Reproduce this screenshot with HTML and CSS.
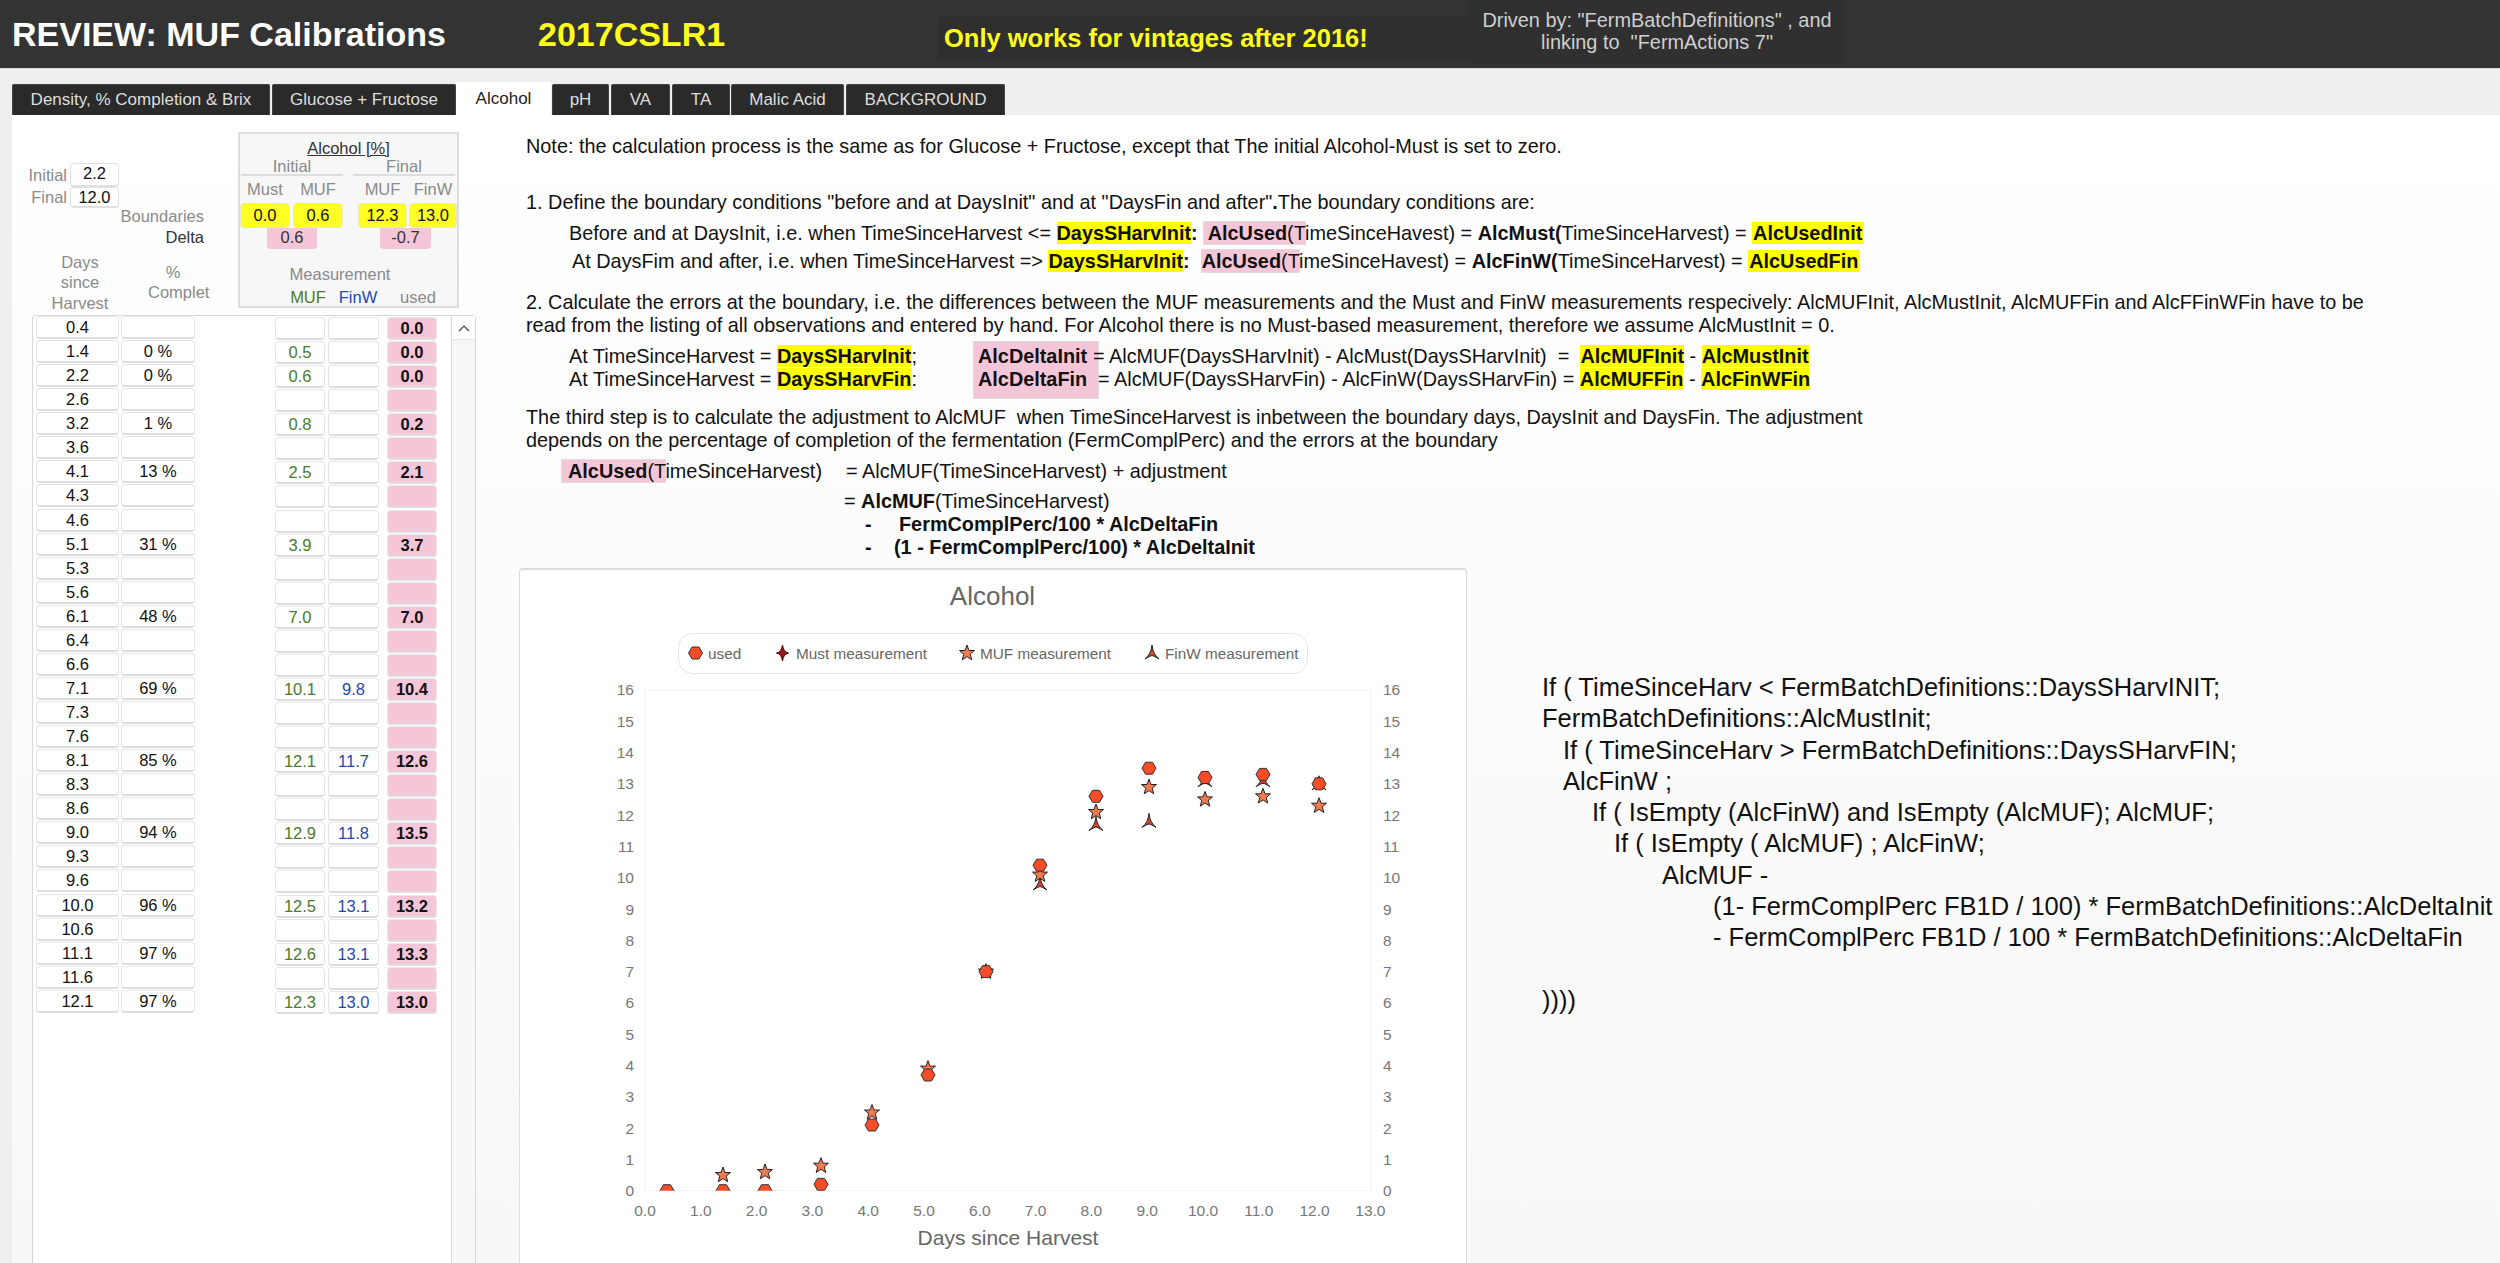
FILE: index.html
```html
<!DOCTYPE html>
<html lang="en">
<head>
<meta charset="utf-8">
<title>REVIEW: MUF Calibrations</title>
<link rel="stylesheet" href="styles.css">
</head>
<body>
<header class="topbar">
  <div class="h-title">REVIEW: MUF Calibrations</div>
  <div class="h-code">2017CSLR1</div>
  <div class="h-note">Only works for vintages after 2016!</div>
  <div class="h-driven">Driven by: "FermBatchDefinitions" , and<br>linking to&nbsp; "FermActions 7"</div>
</header>
<nav class="tabs">
  <a class="tab t1">Density, % Completion &amp; Brix</a>
  <a class="tab t2">Glucose + Fructose</a>
  <a class="tab t3 active">Alcohol</a>
  <a class="tab t4">pH</a>
  <a class="tab t5">VA</a>
  <a class="tab t6">TA</a>
  <a class="tab t7">Malic Acid</a>
  <a class="tab t8">BACKGROUND</a>
</nav>
<main class="panel">
  <section class="left">
    <div class="lhead">
      <div class="params">
        <div class="param first"><span class="plabel">Initial</span><span class="pinput">2.2</span></div>
        <div class="param second"><span class="plabel">Final</span><span class="pinput">12.0</span></div>
        <div class="bound grey">Boundaries</div>
        <div class="bound">Delta</div>
        <div class="colheads">
          <div class="ch-days grey">Days<br>since<br>Harvest</div>
          <div class="ch-pct grey">%<br>Complet</div>
        </div>
      </div>
      <div class="box">
        <div class="box-title"><u>Alcohol [%]</u></div>
        <div class="box-groups"><div class="grey">Initial</div><div class="grey g2">Final</div></div>
        <div class="box-cells heads grey"><span class="b1">Must</span><span class="b2">MUF</span><span class="b3">MUF</span><span class="b4">FinW</span></div>
        <div class="box-cells vals"><span class="b1 yel">0.0</span><span class="b2 yel">0.6</span><span class="b3 yel">12.3</span><span class="b4 yel">13.0</span></div>
        <div class="box-deltas"><span class="d1">0.6</span><span class="d2">-0.7</span></div>
        <div class="box-meas grey">Measurement</div>
        <div class="box-legend"><span class="l1 green">MUF</span><span class="l2 blue">FinW</span><span class="l3 grey">used</span></div>
      </div>
    </div>
    <div class="portal">
      <div class="rows">
        <div class="row"><span class="c cd">0.4</span><span class="c cp"></span><span class="c cm"></span><span class="c cf"></span><span class="c cu">0.0</span></div>
        <div class="row"><span class="c cd">1.4</span><span class="c cp">0 %</span><span class="c cm">0.5</span><span class="c cf"></span><span class="c cu">0.0</span></div>
        <div class="row"><span class="c cd">2.2</span><span class="c cp">0 %</span><span class="c cm">0.6</span><span class="c cf"></span><span class="c cu">0.0</span></div>
        <div class="row"><span class="c cd">2.6</span><span class="c cp"></span><span class="c cm"></span><span class="c cf"></span><span class="c cu"></span></div>
        <div class="row"><span class="c cd">3.2</span><span class="c cp">1 %</span><span class="c cm">0.8</span><span class="c cf"></span><span class="c cu">0.2</span></div>
        <div class="row"><span class="c cd">3.6</span><span class="c cp"></span><span class="c cm"></span><span class="c cf"></span><span class="c cu"></span></div>
        <div class="row"><span class="c cd">4.1</span><span class="c cp">13 %</span><span class="c cm">2.5</span><span class="c cf"></span><span class="c cu">2.1</span></div>
        <div class="row"><span class="c cd">4.3</span><span class="c cp"></span><span class="c cm"></span><span class="c cf"></span><span class="c cu"></span></div>
        <div class="row"><span class="c cd">4.6</span><span class="c cp"></span><span class="c cm"></span><span class="c cf"></span><span class="c cu"></span></div>
        <div class="row"><span class="c cd">5.1</span><span class="c cp">31 %</span><span class="c cm">3.9</span><span class="c cf"></span><span class="c cu">3.7</span></div>
        <div class="row"><span class="c cd">5.3</span><span class="c cp"></span><span class="c cm"></span><span class="c cf"></span><span class="c cu"></span></div>
        <div class="row"><span class="c cd">5.6</span><span class="c cp"></span><span class="c cm"></span><span class="c cf"></span><span class="c cu"></span></div>
        <div class="row"><span class="c cd">6.1</span><span class="c cp">48 %</span><span class="c cm">7.0</span><span class="c cf"></span><span class="c cu">7.0</span></div>
        <div class="row"><span class="c cd">6.4</span><span class="c cp"></span><span class="c cm"></span><span class="c cf"></span><span class="c cu"></span></div>
        <div class="row"><span class="c cd">6.6</span><span class="c cp"></span><span class="c cm"></span><span class="c cf"></span><span class="c cu"></span></div>
        <div class="row"><span class="c cd">7.1</span><span class="c cp">69 %</span><span class="c cm">10.1</span><span class="c cf">9.8</span><span class="c cu">10.4</span></div>
        <div class="row"><span class="c cd">7.3</span><span class="c cp"></span><span class="c cm"></span><span class="c cf"></span><span class="c cu"></span></div>
        <div class="row"><span class="c cd">7.6</span><span class="c cp"></span><span class="c cm"></span><span class="c cf"></span><span class="c cu"></span></div>
        <div class="row"><span class="c cd">8.1</span><span class="c cp">85 %</span><span class="c cm">12.1</span><span class="c cf">11.7</span><span class="c cu">12.6</span></div>
        <div class="row"><span class="c cd">8.3</span><span class="c cp"></span><span class="c cm"></span><span class="c cf"></span><span class="c cu"></span></div>
        <div class="row"><span class="c cd">8.6</span><span class="c cp"></span><span class="c cm"></span><span class="c cf"></span><span class="c cu"></span></div>
        <div class="row"><span class="c cd">9.0</span><span class="c cp">94 %</span><span class="c cm">12.9</span><span class="c cf">11.8</span><span class="c cu">13.5</span></div>
        <div class="row"><span class="c cd">9.3</span><span class="c cp"></span><span class="c cm"></span><span class="c cf"></span><span class="c cu"></span></div>
        <div class="row"><span class="c cd">9.6</span><span class="c cp"></span><span class="c cm"></span><span class="c cf"></span><span class="c cu"></span></div>
        <div class="row"><span class="c cd">10.0</span><span class="c cp">96 %</span><span class="c cm">12.5</span><span class="c cf">13.1</span><span class="c cu">13.2</span></div>
        <div class="row"><span class="c cd">10.6</span><span class="c cp"></span><span class="c cm"></span><span class="c cf"></span><span class="c cu"></span></div>
        <div class="row"><span class="c cd">11.1</span><span class="c cp">97 %</span><span class="c cm">12.6</span><span class="c cf">13.1</span><span class="c cu">13.3</span></div>
        <div class="row"><span class="c cd">11.6</span><span class="c cp"></span><span class="c cm"></span><span class="c cf"></span><span class="c cu"></span></div>
        <div class="row"><span class="c cd">12.1</span><span class="c cp">97 %</span><span class="c cm">12.3</span><span class="c cf">13.0</span><span class="c cu">13.0</span></div>
      </div>
      <div class="scrollbar">
        <div class="scroll-up"><svg width="12" height="8" viewBox="0 0 12 8"><path d="M1 7 L6 2 L11 7" fill="none" stroke="#444" stroke-width="1.2"/></svg></div>
      </div>
    </div>
  </section>
  <section class="right">
    <p class="line note">Note: the calculation process is the same as for Glucose + Fructose, except that The initial Alcohol-Must is set to zero.</p>
    <p class="line step1">1. Define the boundary conditions "before and at DaysInit" and at "DaysFin and after"<b>.</b>The boundary conditions are:</p>
    <p class="line cond c1">Before and at DaysInit, i.e. when TimeSinceHarvest &lt;= <b class="y">DaysSHarvInit</b><b>:</b><span class="pink pk1"><b>AlcUsed</b>(T</span>imeSinceHavest) = <b>AlcMust(</b>TimeSinceHarvest) = <b class="y yp">AlcUsedInit</b></p>
    <p class="line cond c2">At DaysFim and after, i.e. when TimeSinceHarvest =&gt; <b class="y">DaysSHarvInit</b><b>:</b><span class="pink pk2"><b>AlcUsed</b>(T</span>imeSinceHavest) = <b>AlcFinW(</b>TimeSinceHarvest) = <b class="y yp">AlcUsedFin</b></p>
    <p class="line step2">2. Calculate the errors at the boundary, i.e. the differences between the MUF measurements and the Must and FinW measurements respecively: AlcMUFInit, AlcMustInit, AlcMUFFin and AlcFFinWFin have to be<br>read from the listing of all observations and entered by hand. For Alcohol there is no Must-based measurement, therefore we assume AlcMustInit = 0.</p>
    <div class="deltas">
      <div class="line">At TimeSinceHarvest = <b class="y">DaysSHarvInit</b>;</div>
      <div class="delta-box"><b>AlcDeltaInit</b><br><b>AlcDeltaFin</b></div>
      <div class="line de1">= AlcMUF(DaysSHarvInit) - AlcMust(DaysSHarvInit)  =  <b class="y">AlcMUFInit</b> - <b class="y">AlcMustInit</b></div>
      <div class="line">At TimeSinceHarvest = <b class="y">DaysSHarvFin</b>:</div>
      <div class="line de2">= AlcMUF(DaysSHarvFin) - AlcFinW(DaysSHarvFin) = <b class="y">AlcMUFFin</b> - <b class="y">AlcFinWFin</b></div>
    </div>
    <p class="line step3">The third step is to calculate the adjustment to AlcMUF  when TimeSinceHarvest is inbetween the boundary days, DaysInit and DaysFin. The adjustment<br>depends on the percentage of completion of the fermentation (FermComplPerc) and the errors at the boundary</p>
    <div class="line formula f1"><span class="f1a"><span class="pink pk3"><b>AlcUsed</b>(T</span>imeSinceHarvest)</span><span>= AlcMUF(TimeSinceHarvest) + adjustment</span></div>
    <div class="line formula f2">= <b>AlcMUF</b>(TimeSinceHarvest)</div>
    <div class="line formula f3"><b class="dash1">-</b><b>FermComplPerc/100 * AlcDeltaFin</b></div>
    <div class="line formula f3"><b class="dash2">-</b><b>(1 - FermComplPerc/100) * AlcDeltaInit</b></div>
    <div class="lower">
      <figure class="chart">
        <svg class="chart-svg" width="946" height="692" viewBox="520 570 946 692">
          <defs>
            <path id="hex" d="M-7 0 L-3.5 -6 L3.5 -6 L7 0 L3.5 6 L-3.5 6 Z" fill="#f44d27" stroke="#333" stroke-width="1"/>
            <path id="star" d="M0 -8 L2 -2.5 L7.5 -2.5 L3.2 1.2 L4.8 6.8 L0 3.6 L-4.8 6.8 L-3.2 1.2 L-7.5 -2.5 L-2 -2.5 Z" fill="#f47a50" stroke="#222" stroke-width="1"/>
            <path id="fin" d="M0 -8 Q0.8 1 7 6 Q1.5 2.5 0 2.5 Q-1.5 2.5 -7 6 Q-0.8 1 0 -8 Z" fill="#d4472c" stroke="#222" stroke-width="1"/>
            <path id="must" d="M0 -8 Q0.8 -1 6 0 Q0.8 1 0 8 Q-0.8 1 -6 0 Q-0.8 -1 0 -8 Z" fill="#a01020" stroke="#400" stroke-width="1"/>
            <clipPath id="plot"><rect x="645" y="690" width="726" height="500.7"/></clipPath>
          </defs>
          <text class="c-title" x="992.5" y="596">Alcohol</text>
          <rect class="c-legend" x="678.5" y="633.5" width="629" height="40" rx="14"/>
          <use href="#hex" x="695.5" y="653"/><text class="c-leg" x="708" y="653">used</text>
          <use href="#must" x="782.5" y="653"/><text class="c-leg" x="796" y="653">Must measurement</text>
          <use href="#star" x="967" y="653"/><text class="c-leg" x="980" y="653">MUF measurement</text>
          <use href="#fin" x="1152" y="653"/><text class="c-leg" x="1165" y="653">FinW measurement</text>
          <rect class="c-plot" x="645" y="690" width="726" height="500.7"/>
          <g class="tick tl">
            <text x="634" y="1190.7">0</text><text x="634" y="1159.4">1</text><text x="634" y="1128.1">2</text><text x="634" y="1096.8">3</text><text x="634" y="1065.5">4</text><text x="634" y="1034.2">5</text><text x="634" y="1002.9">6</text><text x="634" y="971.6">7</text><text x="634" y="940.3">8</text><text x="634" y="909">9</text><text x="634" y="877.7">10</text><text x="634" y="846.4">11</text><text x="634" y="815.1">12</text><text x="634" y="783.8">13</text><text x="634" y="752.5">14</text><text x="634" y="721.2">15</text><text x="634" y="689.9">16</text>
          </g>
          <g class="tick tr">
            <text x="1383" y="1190.7">0</text><text x="1383" y="1159.4">1</text><text x="1383" y="1128.1">2</text><text x="1383" y="1096.8">3</text><text x="1383" y="1065.5">4</text><text x="1383" y="1034.2">5</text><text x="1383" y="1002.9">6</text><text x="1383" y="971.6">7</text><text x="1383" y="940.3">8</text><text x="1383" y="909">9</text><text x="1383" y="877.7">10</text><text x="1383" y="846.4">11</text><text x="1383" y="815.1">12</text><text x="1383" y="783.8">13</text><text x="1383" y="752.5">14</text><text x="1383" y="721.2">15</text><text x="1383" y="689.9">16</text>
          </g>
          <g class="tick tx">
            <text x="645" y="1210">0.0</text><text x="700.8" y="1210">1.0</text><text x="756.6" y="1210">2.0</text><text x="812.4" y="1210">3.0</text><text x="868.2" y="1210">4.0</text><text x="924" y="1210">5.0</text><text x="979.8" y="1210">6.0</text><text x="1035.6" y="1210">7.0</text><text x="1091.4" y="1210">8.0</text><text x="1147.2" y="1210">9.0</text><text x="1203" y="1210">10.0</text><text x="1258.8" y="1210">11.0</text><text x="1314.6" y="1210">12.0</text><text x="1370.4" y="1210">13.0</text>
          </g>
          <text class="c-axis" x="1008" y="1237">Days since Harvest</text>
          <g clip-path="url(#plot)">
            <use href="#fin" x="1040" y="884"/><use href="#fin" x="1096" y="824.5"/><use href="#fin" x="1149" y="821.4"/><use href="#fin" x="1205" y="780.7"/><use href="#fin" x="1263" y="780.7"/><use href="#fin" x="1319" y="783.8"/>
            <use href="#star" x="723" y="1175"/><use href="#star" x="765" y="1172"/><use href="#star" x="821" y="1165.7"/><use href="#star" x="872" y="1112.5"/><use href="#star" x="928" y="1068.6"/><use href="#star" x="986" y="971.6"/><use href="#star" x="1040" y="874.6"/><use href="#star" x="1096" y="812"/><use href="#star" x="1149" y="787"/><use href="#star" x="1205" y="799.4"/><use href="#star" x="1263" y="796.3"/><use href="#star" x="1319" y="805.7"/>
            <use href="#hex" x="667" y="1190.7"/><use href="#hex" x="723" y="1190.7"/><use href="#hex" x="765" y="1190.7"/><use href="#hex" x="821" y="1184.4"/><use href="#hex" x="872" y="1125"/><use href="#hex" x="928" y="1075"/><use href="#hex" x="986" y="971.6"/><use href="#hex" x="1040" y="865.2"/><use href="#hex" x="1096" y="796.3"/><use href="#hex" x="1149" y="768.2"/><use href="#hex" x="1205" y="777.5"/><use href="#hex" x="1263" y="774.4"/><use href="#hex" x="1319" y="783.8"/>
          </g>
        </svg>
      </figure>
      <div class="code">
        <div>If ( TimeSinceHarv &lt; FermBatchDefinitions::DaysSHarvINIT;</div>
        <div>FermBatchDefinitions::AlcMustInit;</div>
        <div class="i1">If ( TimeSinceHarv &gt; FermBatchDefinitions::DaysSHarvFIN;</div>
        <div class="i1">AlcFinW ;</div>
        <div class="i2">If ( IsEmpty (AlcFinW) and IsEmpty (AlcMUF); AlcMUF;</div>
        <div class="i3">If ( IsEmpty ( AlcMUF) ; AlcFinW;</div>
        <div class="i4">AlcMUF -</div>
        <div class="i5">(1- FermComplPerc FB1D / 100) * FermBatchDefinitions::AlcDeltaInit</div>
        <div class="i5">- FermComplPerc FB1D / 100 * FermBatchDefinitions::AlcDeltaFin</div>
        <div class="blank"></div>
        <div>))))</div>
      </div>
    </div>
  </section>
</main>
</body>
</html>
```
FILE: styles.css
```css
* { box-sizing: border-box; }
html, body { margin: 0; height: 1263px; overflow: hidden; }
body {
  width: 2500px;
  background: #efefef;
  font-family: "Liberation Sans", Arial, sans-serif;
  color: #111;
}

/* Header */
.topbar {
  display: flex;
  align-items: center;
  height: 69px;
  padding-left: 12px;
  background: #333;
  border-bottom: 1px solid #d8d8d8;
  white-space: nowrap;
}
.h-title { width: 526px; font-size: 34px; font-weight: bold; color: #fff; }
.h-code { width: 400px; font-size: 34px; font-weight: bold; color: #ffff1e; }
.h-note {
  width: 532px;
  padding: 7px 6px;
  margin-top: 8px;
  background: #2f2f2f;
  font-size: 25.5px;
  font-weight: bold;
  color: #ffff1e;
}
.h-driven {
  align-self: flex-start;
  width: 374px;
  height: 64px;
  padding-top: 9px;
  background: #303030;
  font-size: 19.9px;
  line-height: 22px;
  text-align: center;
  color: #cfcfcf;
}

/* Tabs */
.tabs {
  display: flex;
  align-items: flex-end;
  height: 46px;
  padding-left: 12px;
}
.tab {
  display: flex;
  align-items: center;
  justify-content: center;
  height: 31px;
  margin-right: 2px;
  border: 1px solid #444;
  border-bottom: 0;
  border-radius: 2px 2px 0 0;
  background: #2a2a2a;
  color: #dedede;
  font-size: 17px;
}
.tab.active {
  height: 33px;
  margin-right: 1px;
  border: 0;
  background: #fff;
  color: #222;
}
.t1 { width: 258px; }
.t2 { width: 184px; margin-right: 0; }
.t3 { width: 95px; }
.t4 { width: 57px; }
.t5 { width: 59px; }
.t6 { width: 58px; margin-right: 1px; }
.t7 { width: 113px; }
.t8 { width: 159px; }

/* Panel */
.panel {
  display: flex;
  height: 1148px;
  margin-left: 12px;
  background: linear-gradient(#fff 0, #fdfdfd 200px, #f8f8f8 100%);
}
.left { width: 464px; flex: none; }
.grey { color: #8a8a8a; }
.green { color: #4b7a2a; }
.blue { color: #1f48b0; }

.lhead { display: flex; height: 200px; font-size: 16.5px; }
.params { width: 226px; flex: none; }
.param { display: flex; align-items: center; }
.param.first { height: 24px; margin-top: 48px; }
.param.second { height: 21px; }
.plabel { width: 55px; text-align: right; color: #8a8a8a; }
.pinput {
  width: 49px;
  height: 100%;
  margin-left: 3px;
  border: 1px solid #e0e0e0;
  border-bottom-width: 2px;
  border-radius: 4px;
  background: #fff;
  text-align: center;
  line-height: 19px;
  color: #111;
}
.bound { width: 192px; height: 21px; line-height: 21px; text-align: right; color: #333; }
.bound.grey { margin-top: -2.5px; color: #8a8a8a; }
.colheads { display: flex; margin-top: 4px; line-height: 20.5px; text-align: center; }
.ch-days { width: 136px; }
.ch-pct { width: 50px; padding-top: 10px; white-space: nowrap; }

.box {
  width: 221px;
  height: 176px;
  margin-top: 17px;
  border: 2px solid #ddd;
  background: #f7f7f7;
}
.box-title { height: 20px; margin-top: 4px; text-align: center; line-height: 20px; color: #333; }
.box-groups { display: flex; height: 18px; margin-left: 1px; line-height: 17px; }
.box-groups div { width: 102px; border-bottom: 2px solid #ddd; text-align: center; }
.box-groups .g2 { margin-left: 10px; }
.box-cells { display: flex; }
.box-cells .b1 { width: 50px; }
.box-cells .b2 { width: 50px; margin-left: 3px; }
.box-cells .b3 { width: 49px; margin-left: 15px; }
.box-cells .b4 { width: 48px; margin-left: 2px; }
.box-cells span { text-align: center; }
.heads { height: 22px; margin-top: 2px; line-height: 22px; }
.vals { height: 25px; margin-top: 3px; }
.yel {
  background: #ffff24;
  border: 1px solid #e8e8c8;
  border-radius: 4px;
  line-height: 23px;
}
.box-deltas { display: flex; height: 21px; }
.box-deltas span {
  height: 21px;
  background: #f5c6d8;
  border-radius: 0 0 4px 4px;
  text-align: center;
  line-height: 19px;
  color: #333;
}
.d1 { width: 50px; margin-left: 27px; }
.d2 { width: 51px; margin-left: 63px; }
.box-meas { width: 200px; height: 20px; margin-top: 15px; text-align: center; line-height: 20px; }
.box-legend { display: flex; height: 20px; margin-top: 3px; line-height: 20px; text-align: center; }
.l1 { width: 40px; margin-left: 48px; }
.l2 { width: 40px; margin-left: 10px; }
.l3 { width: 40px; margin-left: 20px; }

/* Portal */
.portal {
  display: flex;
  width: 444px;
  height: 960px;
  margin-left: 20px;
  border: 1px solid #d8d8d8;
  border-bottom: 0;
  border-radius: 4px 4px 0 0;
  background: #fff;
}
.rows { width: 418px; flex: none; padding-left: 3px; }
.row { display: flex; height: 24.07px; font-size: 16.5px; }
.c {
  display: block;
  height: 23px;
  border: 1px solid #e6e6e6;
  border-bottom: 2px solid #ddd;
  border-radius: 4px;
  background: #fff;
  text-align: center;
  line-height: 20px;
}
.cd { width: 83px; color: #111; }
.cp { width: 74px; margin-left: 2px; color: #111; }
.cm { width: 50px; margin-left: 80px; margin-top: 1px; color: #4b7a2a; }
.cf { width: 51px; margin-left: 3px; margin-top: 1px; color: #1f48b0; }
.cu {
  width: 50px;
  margin-left: 8px;
  margin-top: 1px;
  background: #f5c6d8;
  font-weight: bold;
  color: #111;
}
.scrollbar { width: 24px; flex: none; border-left: 1px solid #d8d8d8; background: #f7f7f7; }
.scroll-up {
  display: flex;
  align-items: center;
  justify-content: center;
  height: 24px;
  background: #fff;
  border-bottom: 1px solid #e4e4e4;
}

/* Right text */
.right { flex: 1; padding: 20px 0 0 50px; min-width: 0; }
.line { margin: 0; font-size: 19.85px; line-height: 23px; white-space: pre; color: #111; }
.step1 { margin-top: 33px; }
.cond.c1 { margin-top: 8px; padding-left: 43px; }
.cond.c2 { margin-top: 5px; padding-left: 46px; }
.step2 { margin-top: 18px; }
.y { background: #ffff00; }
.yp { padding: 0 1px; }
.pink {
  background: #f5c6d8;
  box-shadow: 0 0 0 1px #ddd;
}
.pk1 { margin-left: 6px; padding-left: 4px; }
.pk2 { margin-left: 12px; }
.pk3 { padding-left: 6px; }

.deltas {
  display: grid;
  grid-template-columns: 404px 126px 1fr;
  margin-top: 8px;
  padding-left: 43px;
}
.delta-box {
  grid-column: 2;
  grid-row: 1 / span 2;
  margin: -4px 0 -8px;
  padding: 4px 0 0 5px;
  background: #f5c6d8;
  box-shadow: inset 0 0 0 1px #ddd;
  font-size: 19.85px;
  line-height: 23px;
}
.de1 { margin-left: -6px; position: relative; }
.de2 { margin-left: -1px; position: relative; }

.step3 { margin-top: 15px; }
.formula { display: flex; }
.f1 { margin-top: 8px; padding-left: 36px; }
.f1a { width: 284px; flex: none; }
.f2 { margin-top: 7px; padding-left: 318px; display: block; }
.f3 { padding-left: 339px; }
.dash1 { width: 34px; flex: none; }
.dash2 { width: 29px; flex: none; }

/* Lower area */
.lower { display: flex; margin-top: 9px; margin-left: -7px; }
.chart {
  width: 948px;
  height: 700px;
  flex: none;
  margin: 0;
  border: 1px solid #dcdcdc;
  border-top-width: 2px;
  border-radius: 4px;
  background: #fff;
}
.chart-svg { display: block; }
.chart-svg text { font-family: "Liberation Sans", Arial, sans-serif; dominant-baseline: central; fill: #777; }
.chart-svg .c-title { font-size: 26px; text-anchor: middle; fill: #666; }
.chart-svg .c-leg { font-size: 15.3px; fill: #666; }
.chart-svg .c-axis { font-size: 21px; text-anchor: middle; fill: #666; }
.c-legend { fill: #fff; stroke: #e6e6e6; }
.c-plot { fill: #fff; stroke: #f2f2f2; }
.tick { font-size: 15.5px; }
.tl { text-anchor: end; }
.tx { text-anchor: middle; }

.code {
  margin: 104px 0 0 75px;
  font-size: 25.5px;
  line-height: 31.3px;
  white-space: nowrap;
  color: #111;
}
.i1 { padding-left: 21px; }
.i2 { padding-left: 50px; }
.i3 { padding-left: 72px; }
.i4 { padding-left: 120px; }
.i5 { padding-left: 171px; }
.blank { height: 31.3px; }
```
